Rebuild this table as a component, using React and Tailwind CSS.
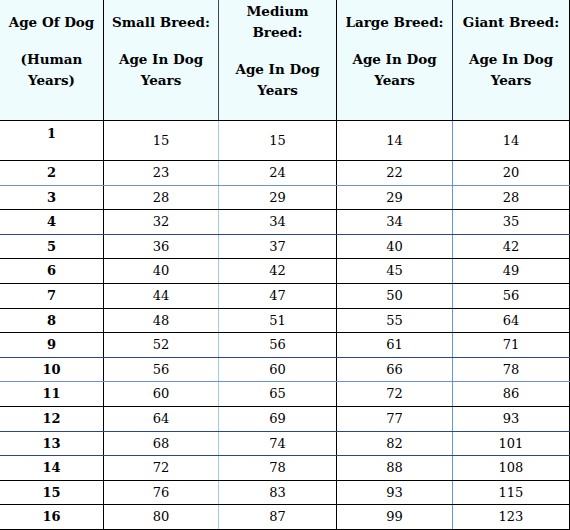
import React from 'react';

const rows = [
  [2, 23, 24, 22, 20],
  [3, 28, 29, 29, 28],
  [4, 32, 34, 34, 35],
  [5, 36, 37, 40, 42],
  [6, 40, 42, 45, 49],
  [7, 44, 47, 50, 56],
  [8, 48, 51, 55, 64],
  [9, 52, 56, 61, 71],
  [10, 56, 60, 66, 78],
  [11, 60, 65, 72, 86],
  [12, 64, 69, 77, 93],
  [13, 68, 74, 82, 101],
  [14, 72, 78, 88, 108],
  [15, 76, 83, 93, 115],
  [16, 80, 87, 99, 123],
];

// bottom line colour per row (after that row)
const lineColor = {
  2: 'border-b-[#6b8fdc]',
  4: 'border-b-[#2c4790]',
  9: 'border-b-[#2c4790]',
  10: 'border-b-[#6b8fdc]',
  12: 'border-b-[#2c4790]',
  13: 'border-b-[#2c4790]',
};

const widths = ['w-[104px]', 'w-[115px]', 'w-[118px]', 'w-[116px]', 'w-[117px]'];
const bodyRight = [
  'border-r-black',
  'border-r-[#a6c8ea]',
  'border-r-black',
  'border-r-[#5d9ad6]',
  'border-r-black',
];
const headRight = [
  'border-r-black',
  'border-r-[#3a4670]',
  'border-r-black',
  'border-r-[#1c2a5c]',
  'border-r-black',
];

const headers = [
  [['Age Of Dog'], ['(Human', 'Years)']],
  [['Small Breed:'], ['Age In Dog', 'Years']],
  [['Medium', 'Breed:'], ['Age In Dog', 'Years']],
  [['Large Breed:'], ['Age In Dog', 'Years']],
  [['Giant Breed:'], ['Age In Dog', 'Years']],
];

export default function App() {
  return (
    <div
      className="w-[570px] h-[530px] bg-white text-black"
      style={{ fontFamily: '"DejaVu Serif", "Liberation Serif", serif' }}
    >
      <div className="flex h-[121px] bg-[#eefcfd] border-b border-b-black">
        {headers.map((h, i) => (
          <div
            key={i}
            className={`${widths[i]} ${headRight[i]} border-r flex flex-col items-center justify-center gap-[16px] pb-[18px] text-[13.5px] font-bold leading-[21px] text-center`}
          >
            <div>{h[0].map((l) => <div key={l}>{l}</div>)}</div>
            <div>{h[1].map((l) => <div key={l}>{l}</div>)}</div>
          </div>
        ))}
      </div>

      <div className="flex h-[40px] border-b border-b-black text-[13px]">
        {[1, 15, 15, 14, 14].map((v, i) => (
          <div
            key={i}
            className={`${widths[i]} ${bodyRight[i]} border-r flex justify-center ${i === 0 ? 'items-start pt-[3px] font-bold' : 'items-center'}`}
          >
            {v}
          </div>
        ))}
      </div>

      {rows.map((r) => (
        <div
          key={r[0]}
          className={`flex h-[24.6px] border-b ${lineColor[r[0]] || 'border-b-black'} text-[13px]`}
        >
          {r.map((v, i) => (
            <div
              key={i}
              className={`${widths[i]} ${bodyRight[i]} border-r flex items-center justify-center ${i === 0 ? 'font-bold' : ''}`}
            >
              {v}
            </div>
          ))}
        </div>
      ))}
    </div>
  );
}
